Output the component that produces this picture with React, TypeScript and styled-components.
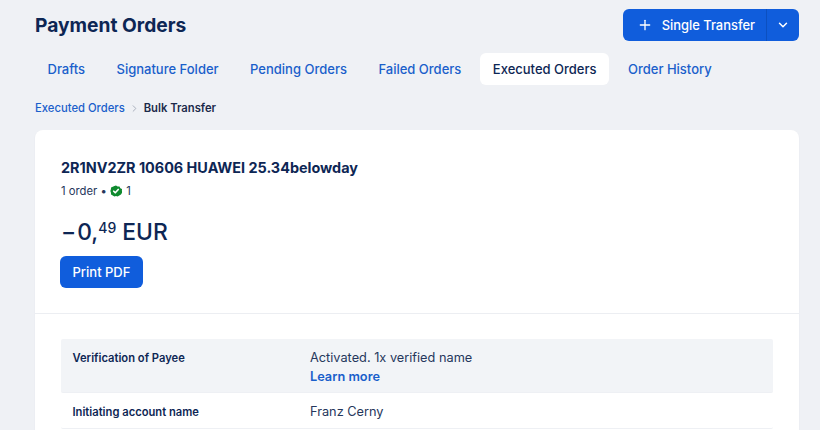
import { ChevronDown, ChevronRight, Plus } from "lucide-react";
import styled, { createGlobalStyle } from "styled-components";

const GlobalStyle = createGlobalStyle`
  html, body {
    margin: 0;
    height: 100%;
    overflow: hidden;
    background: #eff1f5;
  }

  * {
    box-sizing: border-box;
  }
`;

const Page = styled.div`
  width: 820px;
  height: 430px;
  overflow: hidden;
  padding: 9px 21px 0 35px;
  font-family: Inter, "Noto Sans", sans-serif;
  color: #0d2654;
`;

const Header = styled.header`
  display: flex;
  align-items: center;
  justify-content: space-between;
  height: 32px;
`;

const Title = styled.h1`
  margin: 0;
  font-size: 19.2px;
  line-height: 32px;
  font-weight: 700;
  color: #0d2654;
`;

const SplitButton = styled.div`
  display: flex;
  height: 32px;
  border-radius: 6px;
  overflow: hidden;
  background: #105ddc;
  color: #ffffff;
`;

const MainAction = styled.div`
  display: flex;
  align-items: center;
  gap: 9px;
  padding: 0 11px 0 14px;
  font-size: 12.9px;
  font-weight: 500;
  border-right: 1px solid #0c50c0;
`;

const CaretAction = styled.div`
  display: flex;
  align-items: center;
  justify-content: center;
  width: 32px;
`;

const Tabs = styled.nav`
  display: flex;
  gap: 6.5px;
  margin-top: 12px;
`;

const Tab = styled.div<{ $active?: boolean }>`
  display: flex;
  align-items: center;
  height: 32px;
  padding: 0 12.5px;
  border-radius: 6px;
  font-size: 13px;
  font-weight: 500;
  background: ${({ $active }) => ($active ? "#ffffff" : "transparent")};
  color: ${({ $active }) => ($active ? "#0d2654" : "#1a5fcb")};
`;

const Crumbs = styled.div`
  display: flex;
  align-items: center;
  gap: 4px;
  height: 16px;
  margin-top: 15px;
  font-size: 11.25px;
  font-weight: 500;
`;

const CrumbLink = styled.span`
  color: #1a5fcb;
`;

const CrumbCurrent = styled.span`
  font-weight: 600;
  color: #1c2a4a;
`;

const Card = styled.section`
  margin-top: 14px;
  background: #ffffff;
  border-radius: 8px;
  box-shadow: 0 1px 2px rgba(15, 37, 82, 0.06);
`;

const Summary = styled.div`
  padding: 28px 25px 25px;
  border-bottom: 1px solid #eceef2;
`;

const OrderName = styled.h2`
  margin: 0 0 0 1px;
  font-size: 14.4px;
  line-height: 20px;
  font-weight: 700;
  color: #0d2654;
`;

const Meta = styled.div`
  display: flex;
  align-items: center;
  gap: 3px;
  margin: 5px 0 0 1px;
  height: 16px;
  font-size: 11.25px;
  color: #26375c;
`;

const VerifiedBadge = styled.svg`
  display: block;
  width: 12px;
  height: 12px;
  margin-right: 1.5px;
`;

const Amount = styled.div`
  display: flex;
  align-items: flex-start;
  margin: 18px 0 0 1px;
  height: 30px;
  font-size: 22.8px;
  line-height: 30px;
  font-weight: 550;
  color: #0d2654;
`;

const Minus = styled.span`
  margin-right: 1px;
`;

const Cents = styled.span`
  margin: -4px 6px 0 0;
  font-size: 14px;
  font-weight: 500;
`;

const PrintButton = styled.div`
  display: inline-flex;
  align-items: center;
  height: 32px;
  margin-top: 9px;
  padding: 0 12.5px;
  border-radius: 6px;
  background: #105ddc;
  color: #ffffff;
  font-size: 13px;
  font-weight: 500;
`;

const Details = styled.div`
  padding: 25px 26px;
`;

const Row = styled.div<{ $shaded?: boolean }>`
  display: grid;
  grid-template-columns: 237.5px 1fr;
  padding: 9px 12px 6px 11.5px;
  border-radius: 2px;
  background: ${({ $shaded }) => ($shaded ? "#f2f4f7" : "#ffffff")};
  border-bottom: 1px solid #eef0f4;
`;

const Label = styled.div`
  font-size: 11.2px;
  line-height: 20px;
  font-weight: 600;
  color: #0d2654;
`;

const Value = styled.div`
  font-size: 12.75px;
  line-height: 19px;
  color: #26375c;
`;

const LearnMore = styled.div`
  font-weight: 600;
  color: #1a5fcb;
`;

const tabs = [
  "Drafts",
  "Signature Folder",
  "Pending Orders",
  "Failed Orders",
  "Executed Orders",
  "Order History",
];

export default function App() {
  return (
    <Page>
      <GlobalStyle />
      <Header>
        <Title>Payment Orders</Title>
        <SplitButton>
          <MainAction>
            <Plus size={16} strokeWidth={2} />
            Single Transfer
          </MainAction>
          <CaretAction>
            <ChevronDown size={14} strokeWidth={2.5} />
          </CaretAction>
        </SplitButton>
      </Header>

      <Tabs>
        {tabs.map((tab) => (
          <Tab key={tab} $active={tab === "Executed Orders"}>
            {tab}
          </Tab>
        ))}
      </Tabs>

      <Crumbs>
        <CrumbLink>Executed Orders</CrumbLink>
        <ChevronRight size={11} color="#a4abb8" />
        <CrumbCurrent>Bulk Transfer</CrumbCurrent>
      </Crumbs>

      <Card>
        <Summary>
          <OrderName>2R1NV2ZR 10606 HUAWEI 25.34belowday</OrderName>
          <Meta>
            1 order •
            <VerifiedBadge viewBox="0 0 24 24">
              <path
                fill="#0f8a2e"
                d="M12 1l3.2 2.1 3.8-.2 1.7 3.4 3.3 1.9-.2 3.8 1.2 1-1.2 2.9-1.9 3.2-3.4 1.7L15.2 23 12 22l-3.2 1-3.3-2.1-3.4-1.7-.2-3.8L.7 12l1.2-3.8L2.1 5l3.4-1.7L8.8 1.9z"
              />
              <path
                fill="none"
                stroke="#ffffff"
                strokeWidth="3.4"
                strokeLinecap="round"
                strokeLinejoin="round"
                d="M7.5 12.5l3 3 6-6.5"
              />
            </VerifiedBadge>
            1
          </Meta>
          <Amount>
            <Minus>−</Minus>0,<Cents>49</Cents>EUR
          </Amount>
          <div>
            <PrintButton>Print PDF</PrintButton>
          </div>
        </Summary>

        <Details>
          <Row $shaded>
            <Label>Verification of Payee</Label>
            <Value>
              Activated. 1x verified name
              <LearnMore>Learn more</LearnMore>
            </Value>
          </Row>
          <Row>
            <Label>Initiating account name</Label>
            <Value>Franz Cerny</Value>
          </Row>
        </Details>
      </Card>
    </Page>
  );
}
